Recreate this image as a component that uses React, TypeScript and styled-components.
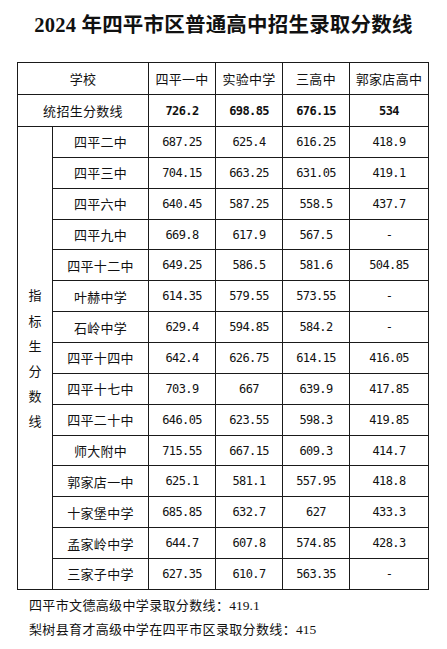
import React from 'react';
import styled, { createGlobalStyle } from 'styled-components';

const cjk = `"Noto Sans CJK SC", "Noto Sans", sans-serif`;
const mono = `"DejaVu Sans Mono", "Liberation Mono", monospace`;

const GlobalStyle = createGlobalStyle`
    html, body {
        margin: 0;
        padding: 0;
        background: #fff;
    }
    body {
        font-family: ${cjk};
        color: #111;
    }
`;

type Row = { school: string; scores: string[] };

const schools = ['四平一中', '实验中学', '三高中', '郭家店高中'];
const unified = ['726.2', '698.85', '676.15', '534'];

const rows: Row[] = [
    { school: '四平二中', scores: ['687.25', '625.4', '616.25', '418.9'] },
    { school: '四平三中', scores: ['704.15', '663.25', '631.05', '419.1'] },
    { school: '四平六中', scores: ['640.45', '587.25', '558.5', '437.7'] },
    { school: '四平九中', scores: ['669.8', '617.9', '567.5', '-'] },
    { school: '四平十二中', scores: ['649.25', '586.5', '581.6', '504.85'] },
    { school: '叶赫中学', scores: ['614.35', '579.55', '573.55', '-'] },
    { school: '石岭中学', scores: ['629.4', '594.85', '584.2', '-'] },
    { school: '四平十四中', scores: ['642.4', '626.75', '614.15', '416.05'] },
    { school: '四平十七中', scores: ['703.9', '667', '639.9', '417.85'] },
    { school: '四平二十中', scores: ['646.05', '623.55', '598.3', '419.85'] },
    { school: '师大附中', scores: ['715.55', '667.15', '609.3', '414.7'] },
    { school: '郭家店一中', scores: ['625.1', '581.1', '557.95', '418.8'] },
    { school: '十家堡中学', scores: ['685.85', '632.7', '627', '433.3'] },
    { school: '孟家岭中学', scores: ['644.7', '607.8', '574.85', '428.3'] },
    { school: '三家子中学', scores: ['627.35', '610.7', '563.35', '-'] },
];

const Page = styled.div`
    width: 447px;
    height: 649px;
    overflow: hidden;
    display: flex;
    flex-direction: column;
`;

const Title = styled.h1`
    margin: 13px 0 0;
    text-align: center;
    font-family: "Liberation Serif", ${cjk};
    font-weight: 700;
    font-size: 20.5px;
    line-height: 24px;
    letter-spacing: 0.2px;
    color: #111;
`;

const Table = styled.table`
    margin: 25px 0 0 17px;
    width: 411px;
    border-collapse: collapse;
    table-layout: fixed;
`;

const HeadRow = styled.tr`
    height: 32px;
`;

const BodyRow = styled.tr`
    height: 30.87px;
`;

const Cell = styled.td<{ $bold?: boolean; $num?: boolean }>`
    border: 1px solid #1a1a1a;
    padding: 0;
    text-align: center;
    vertical-align: middle;
    font-family: ${(p) => (p.$num ? mono : cjk)};
    font-size: ${(p) => (p.$num ? '12px' : '13px')};
    letter-spacing: ${(p) => (p.$num ? '-0.6px' : '0.3px')};
    font-weight: ${(p) => (p.$bold ? 700 : 400)};
    color: #111;
    white-space: nowrap;
`;

const GroupCell = styled.td`
    border: 1px solid #1a1a1a;
    padding: 0;
    text-align: center;
    vertical-align: middle;
    font-size: 13px;
    line-height: 25.2px;
    color: #111;
`;

const GroupChar = styled.div`
    display: block;
`;

const Notes = styled.div`
    margin: 5px 0 0 29px;
    display: flex;
    flex-direction: column;
    gap: 4px;
`;

const Note = styled.div`
    font-size: 13px;
    line-height: 19px;
    letter-spacing: 0.35px;
    color: #111;
`;

const NoteNum = styled.span`
    font-family: "Liberation Serif", serif;
    font-size: 13.5px;
    letter-spacing: 0;
`;

export default function App() {
    return (
        <Page>
            <GlobalStyle />
            <Title>2024 年四平市区普通高中招生录取分数线</Title>
            <Table>
                <colgroup>
                    <col style={{ width: 35 }} />
                    <col style={{ width: 96 }} />
                    <col style={{ width: 67 }} />
                    <col style={{ width: 67 }} />
                    <col style={{ width: 67 }} />
                    <col style={{ width: 79 }} />
                </colgroup>
                <tbody>
                    <HeadRow>
                        <Cell colSpan={2}>学校</Cell>
                        {schools.map((s) => (
                            <Cell key={s}>{s}</Cell>
                        ))}
                    </HeadRow>
                    <HeadRow>
                        <Cell colSpan={2}>统招生分数线</Cell>
                        {unified.map((v) => (
                            <Cell key={v} $num $bold>
                                {v}
                            </Cell>
                        ))}
                    </HeadRow>
                    {rows.map((r, i) => (
                        <BodyRow key={r.school}>
                            {i === 0 && (
                                <GroupCell rowSpan={rows.length}>
                                    {'指标生分数线'.split('').map((c) => (
                                        <GroupChar key={c}>{c}</GroupChar>
                                    ))}
                                </GroupCell>
                            )}
                            <Cell>{r.school}</Cell>
                            {r.scores.map((v, j) => (
                                <Cell key={j} $num>
                                    {v}
                                </Cell>
                            ))}
                        </BodyRow>
                    ))}
                </tbody>
            </Table>
            <Notes>
                <Note>
                    四平市文德高级中学录取分数线：<NoteNum>419.1</NoteNum>
                </Note>
                <Note>
                    梨树县育才高级中学在四平市区录取分数线：<NoteNum>415</NoteNum>
                </Note>
            </Notes>
        </Page>
    );
}
